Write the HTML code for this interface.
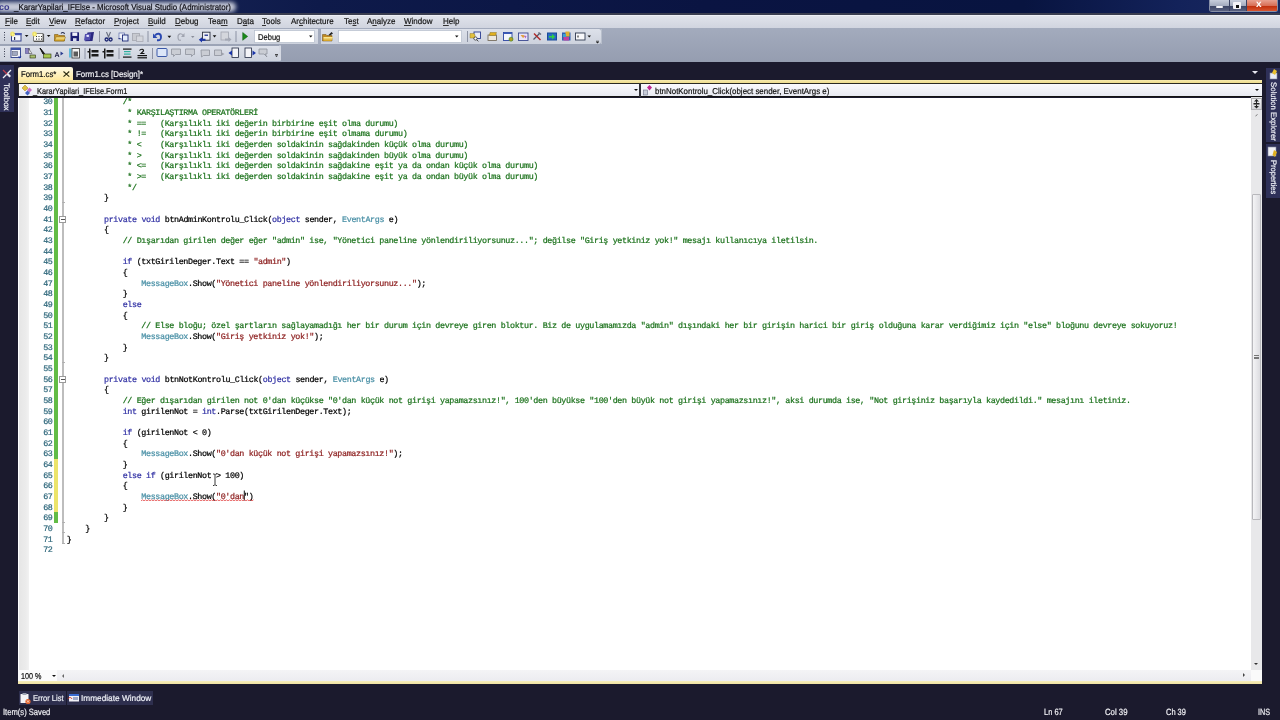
<!DOCTYPE html>
<html><head><meta charset="utf-8">
<style>
*{margin:0;padding:0;box-sizing:border-box}
html,body{width:1280px;height:720px;overflow:hidden}
body{background:#1b1a2d;will-change:transform;text-rendering:geometricPrecision;font-family:"Liberation Sans",sans-serif;font-size:8px;position:relative}
.a{position:absolute}
.mi{position:absolute;top:1.8px;font-size:8.5px;transform-origin:0 0;transform:scaleX(0.94);color:#151515;white-space:nowrap;-webkit-text-stroke:0.2px}
.mi u{text-decoration:underline;text-decoration-thickness:0.8px;text-underline-offset:1.2px;text-decoration-color:#333}
pre{text-rendering:geometricPrecision;font-family:"Liberation Mono",monospace;font-size:8.4px;letter-spacing:-0.3593px;line-height:10.667px;white-space:pre;-webkit-text-stroke:0.22px;filter:blur(0.25px)}
i{font-style:normal}
.k{color:#3232a4}.t{color:#4a90a6}.s{color:#8e2222}.c{color:#1c721c}
svg{position:absolute;overflow:visible}
.u{font-size:8.5px;white-space:nowrap;-webkit-text-stroke:0.2px;transform-origin:0 0}
.st{top:707.2px;font-size:9px;color:#f0f0f4;white-space:nowrap;-webkit-text-stroke:0.2px;transform-origin:0 0}
</style></head><body>
<!-- title bar -->
<div class="a" style="left:0;top:0;width:1280px;height:13px;background:linear-gradient(90deg,#1c2a5c 0%,#0e1a4a 25%,#0a1442 55%,#081440 80%,#13225a 92%,#1a2a60 100%)"></div>
<div class="a" style="left:-4px;top:1.5px;width:240px;height:10px;background:#c6cad8;border-radius:5px;filter:blur(2px)"></div>
<div class="a" style="left:-1px;top:3px;white-space:nowrap;color:#3c3c8c;font-size:9px;font-weight:bold;line-height:9px">co</div>
<div class="a u" style="left:14px;top:2.46px;color:#0c0c14;transform:scaleX(0.927)">_KararYapilari_IFElse - Microsoft Visual Studio (Administrator)</div>
<!-- window buttons -->
<div class="a" style="left:1209px;top:0;width:69px;height:12px;border:1px solid #8890a8;border-top:none;border-radius:0 0 3px 3px;background:#3a4262"></div>
<div class="a" style="left:1210px;top:0;width:19px;height:11px;background:linear-gradient(#c8cedc 0%,#a4acbf 50%,#3c4565 55%,#586080 100%)"></div>
<div class="a" style="left:1230px;top:0;width:16px;height:11px;background:linear-gradient(#c8cedc 0%,#a4acbf 50%,#3c4565 55%,#586080 100%)"></div>
<div class="a" style="left:1247px;top:0;width:30px;height:11px;background:linear-gradient(#e8a090 0%,#d87058 50%,#c02e0c 55%,#d85530 100%)"></div>
<div class="a" style="left:1216px;top:5.5px;width:7px;height:2.5px;background:#f4f4f8;border-radius:1px"></div>
<div class="a" style="left:1233px;top:2px;width:8px;height:7px;background:#f4f4f8;border-radius:1px"></div>
<div class="a" style="left:1235.5px;top:5px;width:3px;height:2.5px;background:#111"></div>
<div class="a" style="left:1256px;top:-1px;color:#fff;font-weight:bold;font-size:10px;line-height:12px">x</div>
<div class="a" style="left:0;top:12.5px;width:1280px;height:2px;background:#3a3e50"></div>

<!-- menu bar -->
<div class="a" style="left:0;top:14.5px;width:1280px;height:14px;background:linear-gradient(#f4f6fa 0px,#dfe2ea 1.5px,#cfd3de 100%)">
<span class="mi" style="left:5px"><u>F</u>ile</span>
<span class="mi" style="left:26px"><u>E</u>dit</span>
<span class="mi" style="left:49px"><u>V</u>iew</span>
<span class="mi" style="left:75px"><u>R</u>efactor</span>
<span class="mi" style="left:114px"><u>P</u>roject</span>
<span class="mi" style="left:148px"><u>B</u>uild</span>
<span class="mi" style="left:175px"><u>D</u>ebug</span>
<span class="mi" style="left:208px">Tea<u>m</u></span>
<span class="mi" style="left:237px">D<u>a</u>ta</span>
<span class="mi" style="left:262px"><u>T</u>ools</span>
<span class="mi" style="left:291px">Ar<u>c</u>hitecture</span>
<span class="mi" style="left:344px">Te<u>s</u>t</span>
<span class="mi" style="left:367px">A<u>n</u>alyze</span>
<span class="mi" style="left:404px"><u>W</u>indow</span>
<span class="mi" style="left:443px"><u>H</u>elp</span>
</div>

<!-- toolbar tray -->
<div class="a" style="left:0;top:28px;width:1280px;height:34px;background:linear-gradient(#a3abbd,#959db0)"></div>
<div class="a" style="left:0;top:29px;width:601px;height:15px;background:linear-gradient(#dde1ea,#cdd2dd);border-radius:0 2px 2px 0"></div>
<div class="a" style="left:0;top:45.5px;width:281px;height:15px;background:linear-gradient(#dde1ea,#cdd2dd);border-radius:0 2px 2px 0"></div>
<div class="a" style="left:601px;top:29px;width:1px;height:15px;background:#b8bfcc"></div>
<svg style="left:0;top:0" width="620" height="64" viewBox="0 0 620 64">
<defs>
<linearGradient id="gy" x1="0" y1="0" x2="0" y2="1"><stop offset="0" stop-color="#fff0a0"/><stop offset="1" stop-color="#d09a18"/></linearGradient>
<radialGradient id="star"><stop offset="0" stop-color="#ffff90"/><stop offset="0.6" stop-color="#f0e060" stop-opacity="0.9"/><stop offset="1" stop-color="#f0e060" stop-opacity="0"/></radialGradient>
</defs>
<g fill="#3a3e50">
<rect x="4" y="32" width="1" height="1"/><rect x="4" y="34.5" width="1" height="1"/><rect x="4" y="37" width="1" height="1"/><rect x="4" y="39.5" width="1" height="1"/>
<rect x="4" y="48.5" width="1" height="1"/><rect x="4" y="51" width="1" height="1"/><rect x="4" y="53.5" width="1" height="1"/><rect x="4" y="56" width="1" height="1"/>
</g>
<g fill="#8c92a4">
<rect x="99" y="31" width="1" height="11"/><rect x="147.5" y="31" width="1" height="11"/><rect x="235.5" y="31" width="1" height="11"/><rect x="467" y="31" width="1" height="11"/>
<rect x="84.5" y="48" width="1" height="11"/><rect x="118.5" y="48" width="1" height="11"/><rect x="152" y="48" width="1" height="11"/>
</g>
<rect x="318" y="28.5" width="3" height="16" fill="#a3abbd"/>
<g fill="#111">
<path d="M24.8 35h3.7l-1.85 2z"/><path d="M46.8 35h3.7l-1.85 2z"/><path d="M167.5 35.7h3.7l-1.85 2.2z"/><path d="M212.7 35.3h3.7l-1.85 2.2z"/><path d="M587.5 35.5h3.5l-1.75 2z"/>
</g>
<path d="M191 36h3.5l-1.75 2z" fill="#8a8e9a"/>
<!-- new project -->
<rect x="11.5" y="33.5" width="9.5" height="7.5" fill="#f4f6fc" stroke="#34408a" stroke-width="1"/>
<rect x="15" y="33" width="6.5" height="2.2" fill="#4a5ab0"/>
<rect x="14" y="37" width="1.2" height="3" fill="#303850"/>
<circle cx="12.5" cy="34" r="3" fill="url(#star)"/>
<!-- add item -->
<rect x="33.5" y="33.5" width="9.5" height="7.5" fill="#fbfbf8" stroke="#666" stroke-width="0.8"/>
<path d="M43.5 34v7.5h-9.5" stroke="#555" stroke-width="1.2" fill="none"/>
<g fill="#333"><rect x="36" y="36" width="1" height="1"/><rect x="38.5" y="36" width="1" height="1"/><rect x="41" y="36" width="1" height="1"/><rect x="36" y="38.5" width="1" height="1.2"/><rect x="38.5" y="38.5" width="1" height="1.2"/><rect x="41" y="38.5" width="1" height="1.2"/></g>
<circle cx="34.5" cy="34" r="3" fill="url(#star)"/>
<!-- open -->
<path d="M54.5 34.5h3.5l1 1h5.5v5.5h-10z" fill="#c89428" stroke="#7a5a10" stroke-width="0.6"/>
<path d="M56 37h9.5l-1.5 4h-9.5z" fill="url(#gy)" stroke="#8a6a18" stroke-width="0.5"/>
<path d="M61 33.5c1-1.5 3-1.5 3.5 0.5" stroke="#2a3050" stroke-width="1.1" fill="none"/>
<!-- save -->
<rect x="70.5" y="32.2" width="8.5" height="8.8" fill="#1c1e74" rx="0.5"/>
<rect x="72.3" y="32.5" width="5" height="3.4" fill="#f0f2fa"/>
<rect x="73" y="38.2" width="3.5" height="2.8" fill="#d8dcf0"/>
<!-- save all -->
<path d="M87.5 32.5l6.5-0.5-1.5 9-7.5 0.2z" fill="#2a2880"/>
<path d="M85 34l6-0.5-1 6.5-6 0.5z" fill="#5450b0"/>
<rect x="86.5" y="35" width="2.5" height="2" fill="#e8e8ff" transform="rotate(-10 87 36)"/>
<!-- cut -->
<path d="M106.5 32l2.2 5.5M110.5 32l-2.2 5.5" stroke="#6a7080" stroke-width="1.1"/>
<circle cx="106.6" cy="39.5" r="1.5" fill="none" stroke="#1a2470" stroke-width="1.3"/>
<circle cx="110.6" cy="39.5" r="1.5" fill="none" stroke="#1a2470" stroke-width="1.3"/>
<!-- copy -->
<rect x="119" y="33" width="5.5" height="6" fill="#f4f6fc" stroke="#5a6aa8" stroke-width="0.7"/>
<rect x="122.5" y="35" width="5.5" height="6" fill="#e4ecfa" stroke="#1e2a78" stroke-width="0.9"/>
<rect x="118.5" y="38" width="2" height="0.8" fill="#1e2a78"/>
<!-- paste disabled -->
<rect x="132.5" y="33.5" width="7" height="7" fill="#c8cad0" stroke="#a4a6ae" stroke-width="0.8"/>
<rect x="136.5" y="36" width="6.5" height="5.5" fill="#d4d6dc" stroke="#a8aab2" stroke-width="0.8"/>
<!-- undo -->
<path d="M155 35.5c2-2.5 6-2.5 6 1.5s-2.5 3.2-4 3.2" stroke="#2a48b0" stroke-width="1.9" fill="none"/>
<path d="M153 33.5v4.5h4.5z" fill="#2a48b0"/>
<!-- redo disabled -->
<path d="M183 35.5c-1.5-2.5-5-2.5-5 1.5s2 3.2 3 3.2" stroke="#a0a4b0" stroke-width="1.2" fill="none"/>
<path d="M184.5 33v4h-3.5z" fill="#a0a4b0"/>
<!-- nav backward -->
<rect x="202.5" y="32.2" width="7.5" height="8" fill="#eceef4" stroke="#2a3040" stroke-width="0.9"/>
<rect x="204.5" y="34.5" width="3.5" height="1.5" fill="#3a4a9a"/>
<path d="M198.8 39.8l3.2-2.6v1.6h3.5v2h-3.5v1.6z" fill="#1a34a8"/>
<!-- nav forward disabled -->
<rect x="221" y="32" width="7.5" height="8" fill="#d4d6dc" stroke="#a0a4ae" stroke-width="0.8"/>
<path d="M231.5 39.5l-3-2.5v1.5h-3.5v2h3.5v1.5z" fill="#a4a8b4"/>
<!-- start debug -->
<path d="M242.7 32.5l5 3.9-5 3.9z" fill="#1a8a1a" stroke="#0e5a0e" stroke-width="0.5"/>
<!-- debug combo -->
<rect x="254.5" y="30.5" width="60" height="12" fill="#fff" stroke="#b4bccb" stroke-width="0.7"/>
<path d="M309 35.5h3.5l-1.75 2z" fill="#111"/>
<!-- find in files icon -->
<path d="M322.5 34.5h3.5l1 1h5v5.5h-9.5z" fill="#c08a20" stroke="#6a4a10" stroke-width="0.5"/>
<path d="M323.5 37h9.5l-1.5 4h-8z" fill="url(#gy)"/>
<path d="M328.5 35l3-3 1.5 1.5-3 2z" fill="#222"/>
<rect x="338.5" y="30.5" width="123" height="12" fill="#fff" stroke="#b4bccb" stroke-width="0.7"/>
<path d="M455 35.5h3.5l-1.75 2z" fill="#111"/>
<!-- right icons -->
<rect x="474" y="32" width="6.5" height="6.5" fill="#e8ecf8" stroke="#2a3c90" stroke-width="0.9"/>
<path d="M470 33.5h4l1 1.5v3h-5z" fill="#e0c040" stroke="#8a7020" stroke-width="0.4"/>
<circle cx="475.5" cy="38.5" r="1.6" fill="#fff" stroke="#333" stroke-width="0.8"/><path d="M476.5 39.6l1.8 1.8" stroke="#333" stroke-width="0.9"/>
<rect x="488" y="35" width="8.5" height="5.5" fill="#ece8e0" stroke="#6a6050" stroke-width="0.8"/>
<path d="M490 32.5h6.5l-1 3h-6z" fill="#e0b020" stroke="#7a6010" stroke-width="0.4"/>
<rect x="503.5" y="32.5" width="8.5" height="8" fill="#f4f6fc" stroke="#2a44a0" stroke-width="0.9"/>
<rect x="503.5" y="32.5" width="8.5" height="1.5" fill="#3a5ab8"/>
<circle cx="511" cy="39.2" r="2" fill="#b8a020" stroke="#3a8a20" stroke-width="0.6"/>
<rect x="518.5" y="33" width="9.5" height="7.5" fill="#e8e4f8" stroke="#3a4890" stroke-width="0.9"/>
<path d="M520.5 35h3l1.5 1.5-2 1.5z" fill="#e0a040"/><path d="M524 35.5l2.5 0.5-1 2.5z" fill="#b060c0"/>
<path d="M533.5 39.5l6-6" stroke="#505868" stroke-width="1.3"/><path d="M534 33.5l6.5 6.5" stroke="#b02828" stroke-width="1.4"/><path d="M538.5 32.5l2.5 2" stroke="#606878" stroke-width="1.5"/>
<rect x="547" y="32.5" width="10" height="8" fill="#184a9a"/><rect x="548" y="33.5" width="8" height="6" fill="#2a6ac0"/><path d="M549 36h3v-2l3.2 2.8-3.2 2.8v-2h-3z" fill="#30d040"/>
<rect x="562" y="32.5" width="8.5" height="8" fill="#3060b0"/><rect x="565.5" y="31.5" width="4" height="5" fill="#e0b030"/><rect x="563.5" y="37" width="5.5" height="3.5" fill="#c040a0"/><rect x="563" y="34" width="3" height="3" fill="#40a0d0"/>
<rect x="575.5" y="33" width="9.5" height="7" fill="#f8f8fa" stroke="#303a50" stroke-width="0.9"/><rect x="577.5" y="35.5" width="1" height="2" fill="#111"/>
<path d="M596 42h3l-1.5 1.5z" fill="#222"/><rect x="596" y="40.8" width="3" height="0.8" fill="#222"/>
<!-- TB2 icons -->
<rect x="11" y="48" width="9.5" height="9.5" fill="#f0f2f8" stroke="#2a3c88" stroke-width="0.9"/><rect x="11" y="48" width="9.5" height="2" fill="#3a50a8"/><rect x="12.5" y="51.5" width="5" height="4" fill="#a0a8c0" stroke="#505870" stroke-width="0.5"/><path d="M18 56.5h3.5l-1.75 2z" fill="#1a34a8"/>
<rect x="25.5" y="48.5" width="4" height="5" fill="#8a80c0" stroke="#404080" stroke-width="0.5"/><path d="M28.5 48.5l3.5 5h-3z" fill="#f4f4f4" stroke="#333" stroke-width="0.5"/><rect x="30" y="55" width="5.5" height="3" fill="#a8c070" stroke="#2a3010" stroke-width="0.6"/>
<path d="M40 48l4.5 5.5-1.5 0.5z" fill="#111" stroke="#111" stroke-width="1"/><rect x="43.5" y="54" width="7.5" height="4" fill="#a8c850" stroke="#2a3010" stroke-width="0.6"/>
<text x="54.5" y="57" font-size="7" font-family="Liberation Sans" font-weight="bold" fill="#1a1a40">A</text><path d="M60.5 51.5l3 2-3 2z" fill="#2a3c90"/>
<rect x="69" y="48.5" width="2.5" height="9" fill="#60b8d8"/><rect x="72" y="48.5" width="7.5" height="9.5" fill="#f4f4f4" stroke="#333" stroke-width="0.8"/><rect x="73.5" y="51.5" width="4.5" height="5" fill="#5a5a5a"/>
<rect x="89" y="48.5" width="1.5" height="10" fill="#1a1a1a"/><rect x="91.5" y="50" width="7" height="2.5" fill="#1a1a1a"/><rect x="91.5" y="54" width="7" height="2.5" fill="#1a1a1a"/><rect x="87.5" y="51" width="1.5" height="1.5" fill="#1a1a1a"/>
<rect x="104" y="48.5" width="1.5" height="10" fill="#1a1a1a"/><rect x="106.5" y="50" width="7" height="2.5" fill="#1a1a1a"/><rect x="106.5" y="54" width="7" height="2.5" fill="#1a1a1a"/><rect x="102.5" y="51" width="1.5" height="1.5" fill="#1a1a1a"/>
<rect x="123" y="48.5" width="8.5" height="1.2" fill="#111"/><rect x="124" y="51" width="6.5" height="1.2" fill="#30b0a0"/><rect x="124" y="53.5" width="6.5" height="1.2" fill="#30b0a0"/><rect x="123" y="56.5" width="8.5" height="1.2" fill="#111"/>
<path d="M139.5 50.5c1.5-2 4.5-1.5 4 0.5l-2.5 2.5h3.5" stroke="#111" stroke-width="1.1" fill="none"/><rect x="137.5" y="55" width="9.5" height="1.2" fill="#111"/><rect x="137.5" y="57.2" width="9.5" height="1.2" fill="#111"/>
<rect x="157" y="48.5" width="10" height="8" fill="#dce6f8" stroke="#3a58a8" stroke-width="1" rx="1"/>
<g fill="#cacdd4" stroke="#8e929c" stroke-width="0.8">
<path d="M171.5 49h9v5.5h-5l-2 2v-2h-2z"/><path d="M185.5 49h9v5.5h-1l-2 2v-2h-6z"/><path d="M201 50h8.5v5.5h-6l-2 1.5z"/><path d="M214.5 50h7v5.5h-7z"/><path d="M259 49h8v5h-2l2 3-3-3h-5z"/>
</g>
<path d="M222 52.5l2.5 1.5-2.5 1.5" fill="#a0a4ae"/>
<rect x="232" y="48" width="6.5" height="9.5" fill="#f4f4f8" stroke="#202840" stroke-width="0.8"/><path d="M228.5 53l3.5-2.5v5z" fill="#1a34a8"/>
<rect x="245" y="48" width="6.5" height="9.5" fill="#f4f4f8" stroke="#202840" stroke-width="0.8"/><path d="M256 53l-3.5-2.5v5z" fill="#1a34a8"/>
<rect x="279" y="45.5" width="2" height="15" fill="#d4d8e2"/>
<path d="M275 55.5h3l-1.5 1.5z" fill="#222"/><rect x="275" y="54.2" width="3" height="0.8" fill="#222"/>
</svg>

<div class="a u" style="left:257.8px;top:32.2px;color:#111;transform:scaleX(0.89)">Debug</div>

<!-- left dock (toolbox) -->
<div class="a" style="left:0;top:64.5px;width:14px;height:47.5px;background:#2e3058"></div>
<div class="a" style="left:3px;top:71px;width:9px;height:9px"></div>
<div class="a" style="left:11px;top:82.8px;color:#eef0f6;white-space:nowrap;transform-origin:0 0;transform:rotate(90deg);-webkit-text-stroke:0.2px">Toolbox</div>

<!-- right dock -->
<div class="a" style="left:1265.5px;top:68px;width:14.5px;height:74px;background:#2e3058"></div>
<div class="a" style="left:1265.5px;top:144px;width:14.5px;height:54px;background:#2e3058"></div>
<div class="a" style="left:1277.5px;top:82px;color:#eef0f6;white-space:nowrap;transform-origin:0 0;transform:rotate(90deg) scaleX(0.965);-webkit-text-stroke:0.2px">Solution Explorer</div>
<div class="a" style="left:1277.5px;top:160px;color:#eef0f6;white-space:nowrap;transform-origin:0 0;transform:rotate(90deg) scaleX(0.94);-webkit-text-stroke:0.2px">Properties</div>

<!-- doc tabs -->
<div class="a" style="left:18px;top:66.5px;width:55px;height:14px;background:linear-gradient(#fffbe6,#fff0b8 60%,#ffe89a);border-radius:2px 2px 0 0"></div>
<div class="a u" style="left:20.8px;top:69.1px;color:#111;transform:scaleX(0.911)">Form1.cs*</div>
<svg style="left:62.7px;top:71px" width="7" height="6"><path d="M0.5 0.5L6.3 5.6M6.3 0.5L0.5 5.6" stroke="#2a2a10" stroke-width="1.1"/></svg>
<div class="a u" style="left:76.2px;top:69.1px;color:#f0f0f4;transform:scaleX(0.927)">Form1.cs [Design]*</div>
<div class="a" style="left:1252px;top:71px;width:0;height:0;border-left:3px solid transparent;border-right:3px solid transparent;border-top:3px solid #e8e8f0"></div>

<!-- editor window -->
<div class="a" style="left:18px;top:79.5px;width:1244px;height:3.5px;background:linear-gradient(#f6eab0,#eedc8c)"></div>
<div class="a" style="left:18px;top:83px;width:1244px;height:14px;background:linear-gradient(#fafafd,#e8eaf2);border-top:1px solid #2a2a24;border-bottom:1.5px solid #141414;border-left:1px solid #303030"></div>
<div class="a" style="left:639px;top:83px;width:2px;height:14px;background:#303038"></div>
<div class="a u" style="left:33.4px;top:85.5px;color:#111;transform:scaleX(0.866)">_KararYapilari_IFElse.Form1</div>
<div class="a u" style="left:655px;top:85.5px;color:#111;transform:scaleX(0.932)">btnNotKontrolu_Click(object sender, EventArgs e)</div>
<div class="a" style="left:634px;top:89px;width:0;height:0;border-left:2.5px solid transparent;border-right:2.5px solid transparent;border-top:2.5px solid #111"></div>
<div class="a" style="left:1255px;top:89px;width:0;height:0;border-left:2.5px solid transparent;border-right:2.5px solid transparent;border-top:2.5px solid #111"></div>
<svg style="left:0;top:0" width="1280" height="720" viewBox="0 0 1280 720">
<path d="M22 88l3-3 3 3-3 3z" fill="#e0c040" stroke="#a08020" stroke-width="0.5"/>
<path d="M27 90l2.5-2.5 2.5 2.5-2.5 2.5z" fill="#d070c0"/>
<path d="M25 93l2.5-2.5 2.5 2.5-2.5 2.5z" fill="#4060c0"/>
<path d="M28.5 92l1.5-1.5" stroke="#8080d0" stroke-width="1"/>
<rect x="643.5" y="90" width="4" height="5" fill="#c8ccd8" stroke="#6a7088" stroke-width="0.6"/>
<path d="M647 87.5l2.5-2.5 2.5 2.5-2.5 3z" fill="#c02890"/>
<!-- toolbox icon -->
<path d="M3 78l8-8" stroke="#f0f0f4" stroke-width="1.2"/>
<path d="M3 70l5 5" stroke="#c04050" stroke-width="1.3"/>
<path d="M8 73l3 3-1.5 1.5-3-3z" fill="#e8e8f0"/>
<!-- solution explorer icon -->
<rect x="1270" y="73" width="7" height="6" fill="#e8ecf4" stroke="#8088a0" stroke-width="0.6"/>
<path d="M1274 69l3 2-2 4-3-2z" fill="#e8c030"/>
<!-- properties icon -->
<rect x="1268" y="147" width="8" height="9" fill="#f0f0f4" stroke="#8088a0" stroke-width="0.6"/>
<path d="M1274 150l3 2-2 5-2.5-2z" fill="#e0b020"/>
<!-- dock tab dropdown (right of tabs) -->
</svg>


<div class="a" id="ed" style="left:18px;top:97.5px;width:1233px;height:572.5px;background:#fff;overflow:hidden">
  <div class="a" style="left:0.5px;top:0;width:10.5px;height:573px;background:linear-gradient(90deg,#e6e6e6,#ececec 70%,#f2f2f2)"></div>
  <pre class="a" style="left:10px;top:-0.3px;width:24.5px;text-align:right;color:#2f687c">30
31
32
33
34
35
36
37
38
39
40
41
42
43
44
45
46
47
48
49
50
51
52
53
54
55
56
57
58
59
60
61
62
63
64
65
66
67
68
69
70
71
72</pre>
  <div class="a" style="left:36px;top:0;width:4px;height:361.4px;background:#62bc46"></div>
  <div class="a" style="left:36px;top:361.4px;width:4px;height:53.3px;background:#ece46a"></div>
<div class="a" style="left:36px;top:414.7px;width:4px;height:10.7px;background:#62bc46"></div>
<div class="a" style="left:44px;top:0;width:1.5px;height:446.4px;background:#bdbdbd"></div>
<div class="a" style="left:44px;top:104.3px;width:3px;height:1px;background:#b0b0b0"></div>
<div class="a" style="left:44px;top:264.3px;width:3px;height:1px;background:#b0b0b0"></div>
<div class="a" style="left:44px;top:424.3px;width:3px;height:1px;background:#b0b0b0"></div>
<div class="a" style="left:44px;top:434.9px;width:3px;height:1px;background:#b0b0b0"></div>
<div class="a" style="left:44px;top:445.6px;width:3px;height:1px;background:#b0b0b0"></div>
<div class="a" style="left:41px;top:118.4px;width:7px;height:7px;background:#fff;border:1px solid #9a9a9a"></div>
<div class="a" style="left:42.5px;top:121.4px;width:4px;height:1px;background:#555"></div>
<div class="a" style="left:41px;top:278.4px;width:7px;height:7px;background:#fff;border:1px solid #9a9a9a"></div>
<div class="a" style="left:42.5px;top:281.4px;width:4px;height:1px;background:#555"></div>

  <pre class="a" style="left:48.7px;top:-0.3px;color:#000">            <i class="c">/*</i>
             <i class="c">* KARŞILAŞTIRMA OPERATÖRLERİ</i>
             <i class="c">* ==   (Karşılıklı iki değerin birbirine eşit olma durumu)</i>
             <i class="c">* !=   (Karşılıklı iki değerin birbirine eşit olmama durumu)</i>
             <i class="c">* &lt;    (Karşılıklı iki değerden soldakinin sağdakinden küçük olma durumu)</i>
             <i class="c">* &gt;    (Karşılıklı iki değerden soldakinin sağdakinden büyük olma durumu)</i>
             <i class="c">* &lt;=   (Karşılıklı iki değerden soldakinin sağdakine eşit ya da ondan küçük olma durumu)</i>
             <i class="c">* &gt;=   (Karşılıklı iki değerden soldakinin sağdakine eşit ya da ondan büyük olma durumu)</i>
             <i class="c">*/</i>
        }

        <i class="k">private</i> <i class="k">void</i> btnAdminKontrolu_Click(<i class="k">object</i> sender, <i class="t">EventArgs</i> e)
        {
            <i class="c">// Dışarıdan girilen değer eğer "admin" ise, "Yönetici paneline yönlendiriliyorsunuz..."; değilse "Giriş yetkiniz yok!" mesajı kullanıcıya iletilsin.</i>

            <i class="k">if</i> (txtGirilenDeger.Text == <i class="s">"admin"</i>)
            {
                <i class="t">MessageBox</i>.Show(<i class="s">"Yönetici paneline yönlendiriliyorsunuz..."</i>);
            }
            <i class="k">else</i>
            {
                <i class="c">// Else bloğu; özel şartların sağlayamadığı her bir durum için devreye giren bloktur. Biz de uygulamamızda "admin" dışındaki her bir girişin harici bir giriş olduğuna karar verdiğimiz için "else" bloğunu devreye sokuyoruz!</i>
                <i class="t">MessageBox</i>.Show(<i class="s">"Giriş yetkiniz yok!"</i>);
            }
        }

        <i class="k">private</i> <i class="k">void</i> btnNotKontrolu_Click(<i class="k">object</i> sender, <i class="t">EventArgs</i> e)
        {
            <i class="c">// Eğer dışarıdan girilen not 0'dan küçükse "0'dan küçük not girişi yapamazsınız!", 100'den büyükse "100'den büyük not girişi yapamazsınız!", aksi durumda ise, "Not girişiniz başarıyla kaydedildi." mesajını iletiniz.</i>
            <i class="k">int</i> girilenNot = <i class="k">int</i>.Parse(txtGirilenDeger.Text);

            <i class="k">if</i> (girilenNot &lt; 0)
            {
                <i class="t">MessageBox</i>.Show(<i class="s">"0'dan küçük not girişi yapamazsınız!"</i>);
            }
            <i class="k">else</i> <i class="k">if</i> (girilenNot &gt; 100)
            {
                <i class="t">MessageBox</i>.Show(<i class="s">"0'dan</i>")
            }
        }
    }
}
</pre>
</div>
<!-- v scrollbar -->
<div class="a" style="left:1251px;top:97px;width:11px;height:573px;background:#e8e8ea"></div>
<div class="a" style="left:1252px;top:194px;width:9px;height:326px;background:linear-gradient(90deg,#f4f4f6,#dcdce0);border:1px solid #b8b8bc;border-radius:1px"></div>
<div class="a" style="left:1254px;top:355px;width:5px;height:4px;border-top:1px solid #777;border-bottom:1px solid #777"></div>
<div class="a" style="left:1254px;top:357px;width:5px;height:1px;background:#777"></div>
<div class="a" style="left:1254px;top:662.5px;width:0;height:0;border-left:2.5px solid transparent;border-right:2.5px solid transparent;border-top:2.5px solid #333"></div>

<div class="a" style="left:1251px;top:97.5px;width:11px;height:12px;background:linear-gradient(#f0f0f2,#d4d4d8);border:1px solid #b0b0b4"></div>
<!-- h scrollbar row -->
<div class="a" style="left:18px;top:670px;width:1244px;height:11px;background:linear-gradient(#f4f4f6,#ececf0)"></div>
<div class="a" style="left:18px;top:670px;width:39px;height:11px;background:#fbfbfc"></div>
<div class="a u" style="left:21.4px;top:671.3px;color:#111;transform:scaleX(0.846)">100 %</div>
<div class="a" style="left:52px;top:675px;width:0;height:0;border-left:2.5px solid transparent;border-right:2.5px solid transparent;border-top:2.5px solid #111"></div>
<div class="a" style="left:62px;top:673.5px;width:0;height:0;border-top:2px solid transparent;border-bottom:2px solid transparent;border-right:2px solid #666"></div>
<div class="a" style="left:1243px;top:673px;width:0;height:0;border-top:2.5px solid transparent;border-bottom:2.5px solid transparent;border-left:2.5px solid #444"></div>
<div class="a" style="left:1251px;top:670px;width:11px;height:11px;background:#fafafa"></div>
<div class="a" style="left:18px;top:681px;width:1244px;height:3px;background:linear-gradient(#f6eebc,#f0e2a0)"></div>

<!-- bottom tabs -->
<div class="a" style="left:18.7px;top:691px;width:47px;height:13.5px;background:#2e2f4e"></div>
<div class="a" style="left:66.8px;top:691px;width:86.7px;height:13.5px;background:#2e2f4e"></div>
<svg style="left:0;top:0" width="1280" height="720" viewBox="0 0 1280 720"><!-- bottom icons -->
<rect x="20.5" y="694" width="8" height="9" fill="#f4f4f6" rx="0.5"/>
<rect x="22.5" y="693" width="4" height="2" fill="#9aa0b0"/>
<circle cx="28" cy="701.5" r="2.6" fill="#e06028"/>
<path d="M26.8 700.3l2.4 2.4M29.2 700.3l-2.4 2.4" stroke="#fff" stroke-width="0.7"/>
<rect x="69" y="694" width="10" height="7.5" fill="#f0f0f6"/>
<rect x="69" y="694" width="10" height="2" fill="#3a6ad0"/>
<rect x="73" y="697" width="5" height="3" fill="#a0a8c8"/>
<path d="M68 699c1-2 3-2 4 0" stroke="#d03020" stroke-width="1" fill="none"/>
<!-- editor split button -->
<path d="M1254 101.5l2.5-2.5 2.5 2.5z" fill="#222"/><rect x="1256" y="101" width="1" height="2" fill="#222"/>
<rect x="1253.5" y="103" width="6" height="1.5" fill="#222"/>
<rect x="1256" y="104.5" width="1" height="2" fill="#222"/><path d="M1254 106l2.5 2.5 2.5-2.5z" fill="#222"/>
<path d="M1255.5 116l2-1.5" stroke="#777" stroke-width="1"/>

<!-- caret, squiggle, ibeam -->
<rect x="243.8" y="490.5" width="1" height="10" fill="#111"/>
<path d="M141 500.8 l1.5 -1 1.5 1 l1.5 -1 1.5 1 l1.5 -1 1.5 1 l1.5 -1 1.5 1 l1.5 -1 1.5 1 l1.5 -1 1.5 1 l1.5 -1 1.5 1 l1.5 -1 1.5 1 l1.5 -1 1.5 1 l1.5 -1 1.5 1 l1.5 -1 1.5 1 l1.5 -1 1.5 1 l1.5 -1 1.5 1 l1.5 -1 1.5 1 l1.5 -1 1.5 1 l1.5 -1 1.5 1 l1.5 -1 1.5 1 l1.5 -1 1.5 1 l1.5 -1 1.5 1 l1.5 -1 1.5 1 l1.5 -1 1.5 1 l1.5 -1 1.5 1 l1.5 -1 1.5 1 l1.5 -1 1.5 1 l1.5 -1 1.5 1 l1.5 -1 1.5 1 l1.5 -1 1.5 1 l1.5 -1 1.5 1 l1.5 -1 1.5 1 l1.5 -1 1.5 1 l1.5 -1 1.5 1 l1.5 -1 1.5 1 l1.5 -1 1.5 1 l1.5 -1 1.5 1 l1.5 -1 1.5 1 l1.5 -1 1.5 1 l1.5 -1 1.5 1 l1.5 -1" stroke="#e03030" stroke-width="0.7" fill="none"/>
<path d="M213 474h1.2l0.8 0.8 0.8 -0.8h1.2M215 474.8v10M213 485.5h1.2l0.8 -0.8 0.8 0.8h1.2" stroke="#222" stroke-width="0.9" fill="none"/>
</svg>
<div class="a u" style="left:33.3px;top:693.3px;color:#eef0f6;transform:scaleX(0.885)">Error List</div>
<div class="a u" style="left:81.4px;top:693.3px;color:#eef0f6;transform:scaleX(0.973)">Immediate Window</div>

<!-- status bar -->
<div class="a st" style="left:2.7px;transform:scaleX(0.845)">Item(s) Saved</div>
<div class="a st" style="left:1043.7px;transform:scaleX(0.83)">Ln 67</div>
<div class="a st" style="left:1105px;transform:scaleX(0.865)">Col 39</div>
<div class="a st" style="left:1166px;transform:scaleX(0.83)">Ch 39</div>
<div class="a st" style="left:1257.5px;transform:scaleX(0.8)">INS</div>
</body></html>
